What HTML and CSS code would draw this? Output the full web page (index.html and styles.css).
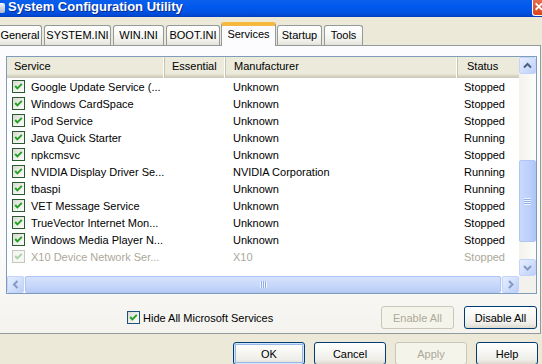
FILE: index.html
```html
<!DOCTYPE html>
<html>
<head>
<meta charset="utf-8">
<title>System Configuration Utility</title>
<link rel="stylesheet" href="styles.css">
</head>
<body>
<div class="window">
  <div class="titlebar">
    <span class="app-icon"></span>
    <span class="title">System Configuration Utility</span>
    <span class="close"><svg viewBox="0 0 10 15"><path d="M3 3 L10 10 M10 3 L3 10"/></svg></span>
  </div>

  <div class="tabs">
    <div class="tab t-general">General</div>
    <div class="tab t-system">SYSTEM.INI</div>
    <div class="tab t-win">WIN.INI</div>
    <div class="tab t-boot">BOOT.INI</div>
    <div class="tab t-services active">Services</div>
    <div class="tab t-startup">Startup</div>
    <div class="tab t-tools">Tools</div>
  </div>

  <div class="panel">
    <div class="listbox">
      <div class="listview">
        <div class="header">
          <div class="hcell">Service</div>
          <div class="hcell">Essential</div>
          <div class="hcell hcell-mfr">Manufacturer</div>
          <div class="hcell hcell-last">Status</div>
        </div>
        <div class="rows">
          <div class="row"><div class="c-name"><span class="cb"><svg viewBox="0 0 11 11"><path d="M2.2 5 L4.4 7.4 L8.8 2.8"/></svg></span>Google Update Service (...</div><div></div><div class="c-mfr">Unknown</div><div class="c-status">Stopped</div></div>
          <div class="row"><div class="c-name"><span class="cb"><svg viewBox="0 0 11 11"><path d="M2.2 5 L4.4 7.4 L8.8 2.8"/></svg></span>Windows CardSpace</div><div></div><div class="c-mfr">Unknown</div><div class="c-status">Stopped</div></div>
          <div class="row"><div class="c-name"><span class="cb"><svg viewBox="0 0 11 11"><path d="M2.2 5 L4.4 7.4 L8.8 2.8"/></svg></span>iPod Service</div><div></div><div class="c-mfr">Unknown</div><div class="c-status">Stopped</div></div>
          <div class="row"><div class="c-name"><span class="cb"><svg viewBox="0 0 11 11"><path d="M2.2 5 L4.4 7.4 L8.8 2.8"/></svg></span>Java Quick Starter</div><div></div><div class="c-mfr">Unknown</div><div class="c-status">Running</div></div>
          <div class="row"><div class="c-name"><span class="cb"><svg viewBox="0 0 11 11"><path d="M2.2 5 L4.4 7.4 L8.8 2.8"/></svg></span>npkcmsvc</div><div></div><div class="c-mfr">Unknown</div><div class="c-status">Stopped</div></div>
          <div class="row"><div class="c-name"><span class="cb"><svg viewBox="0 0 11 11"><path d="M2.2 5 L4.4 7.4 L8.8 2.8"/></svg></span>NVIDIA Display Driver Se...</div><div></div><div class="c-mfr">NVIDIA Corporation</div><div class="c-status">Running</div></div>
          <div class="row"><div class="c-name"><span class="cb"><svg viewBox="0 0 11 11"><path d="M2.2 5 L4.4 7.4 L8.8 2.8"/></svg></span>tbaspi</div><div></div><div class="c-mfr">Unknown</div><div class="c-status">Running</div></div>
          <div class="row"><div class="c-name"><span class="cb"><svg viewBox="0 0 11 11"><path d="M2.2 5 L4.4 7.4 L8.8 2.8"/></svg></span>VET Message Service</div><div></div><div class="c-mfr">Unknown</div><div class="c-status">Stopped</div></div>
          <div class="row"><div class="c-name"><span class="cb"><svg viewBox="0 0 11 11"><path d="M2.2 5 L4.4 7.4 L8.8 2.8"/></svg></span>TrueVector Internet Mon...</div><div></div><div class="c-mfr">Unknown</div><div class="c-status">Stopped</div></div>
          <div class="row"><div class="c-name"><span class="cb"><svg viewBox="0 0 11 11"><path d="M2.2 5 L4.4 7.4 L8.8 2.8"/></svg></span>Windows Media Player N...</div><div></div><div class="c-mfr">Unknown</div><div class="c-status">Stopped</div></div>
          <div class="row disabled"><div class="c-name"><span class="cb"><svg viewBox="0 0 11 11"><path d="M2.2 5 L4.4 7.4 L8.8 2.8"/></svg></span>X10 Device Network Ser...</div><div></div><div class="c-mfr">X10</div><div class="c-status">Stopped</div></div>
        </div>
      </div>

      <div class="vscroll">
        <div class="sbtn"><svg viewBox="0 0 15 15"><path class="arr dark" d="M4 9.5 L7.5 6 L11 9.5"/></svg></div>
        <div class="vtrack">
          <div class="vthumb"><span class="grip-h"></span></div>
        </div>
        <div class="sbtn"><svg viewBox="0 0 15 15"><path class="arr" d="M4 6 L7.5 9.5 L11 6"/></svg></div>
      </div>

      <div class="hscroll">
        <div class="sbtn"><svg viewBox="0 0 15 15"><path class="arr" d="M9.5 4 L6 7.5 L9.5 11"/></svg></div>
        <div class="hthumb"><span class="grip-v"></span></div>
        <div class="sbtn"><svg viewBox="0 0 15 15"><path class="arr" d="M6 4 L9.5 7.5 L6 11"/></svg></div>
      </div>
      <div class="corner"></div>
    </div>

    <div class="panel-footer">
      <label class="hide-ms"><span class="cb"><svg viewBox="0 0 11 11"><path d="M2.2 5 L4.4 7.4 L8.8 2.8"/></svg></span>Hide All Microsoft Services</label>
      <div class="btn-group">
        <button class="btn disabled-btn">Enable All</button>
        <button class="btn">Disable All</button>
      </div>
    </div>
  </div>

  <div class="dialog-buttons">
    <button class="btn dlg default-btn">OK</button>
    <button class="btn dlg">Cancel</button>
    <button class="btn dlg disabled-btn">Apply</button>
    <button class="btn dlg help">Help</button>
  </div>
</div>
<div class="watermark">Protect more of your memories for less</div>
</body>
</html>
```

FILE: styles.css
```css
* { box-sizing: border-box; }

html, body {
  margin: 0;
  padding: 0;
}

body {
  width: 542px;
  height: 364px;
  overflow: hidden;
  position: relative;
  background: #ECE9D8;
  font-family: "Liberation Sans", Arial, sans-serif;
  font-size: 11px;
  color: #000;
}

.window {
  width: 542px;
}

/* ---------- title bar ---------- */
.titlebar {
  height: 17px;
  display: flex;
  align-items: flex-start;
  background: linear-gradient(to bottom, #0B5FEC 0%, #0259EE 35%, #0054E6 65%, #004AD5 88%, #003FBC 100%);
}

.app-icon {
  width: 5px;
  height: 10px;
  margin-top: 3px;
  margin-right: 3px;
  background: linear-gradient(to bottom, #F4F6FA, #AEB8CC);
  border-radius: 0 2px 2px 0;
}

.title {
  color: #fff;
  font-weight: bold;
  font-size: 13px;
  line-height: 14px;
  text-shadow: 1px 1px 0 #0A2A8A;
  white-space: nowrap;
}

.close {
  margin-left: auto;
  width: 10px;
  height: 16px;
  background: linear-gradient(to bottom, #E86D4A, #D9461F);
  border-left: 1px solid #fff;
  border-bottom: 1px solid #fff;
  border-radius: 0 0 0 3px;
}

.close svg {
  display: block;
  width: 9px;
  height: 15px;
}

.close path {
  stroke: #fff;
  stroke-width: 2;
  fill: none;
}

/* ---------- tabs ---------- */
.tabs {
  height: 28px;
  display: flex;
  align-items: flex-end;
  margin-left: -5px;
  position: relative;
  z-index: 2;
}

.tab {
  height: 20px;
  margin-right: 2px;
  border: 1px solid #919B9C;
  border-bottom: none;
  border-radius: 3px 3px 0 0;
  background: linear-gradient(to bottom, #FFFFFF 0%, #FAFAF8 40%, #EFEEE8 80%, #E3E2DA 100%);
  text-align: center;
  line-height: 19px;
  white-space: nowrap;
}

.t-general { width: 47px; padding-left: 3px; }
.t-system { width: 67px; }
.t-win { width: 51px; }
.t-boot { width: 54px; margin-right: 1px; }
.t-services { width: 55px; margin-right: 1px; }
.t-startup { width: 45px; }
.t-tools { width: 39px; }

.tab.active {
  height: 24px;
  margin-bottom: -1px;
  background: #FCFCFE;
  border-top: 3px solid #F7B93C;
  box-shadow: inset 0 1px 0 #F3B845;
  line-height: 19px;
  border-radius: 3px 3px 0 0;
}

/* ---------- panel ---------- */
.panel {
  margin-left: -3px;
  width: 544px;
  height: 289px;
  border: 1px solid #919B9C;
  background: linear-gradient(to bottom, #FCFCFE 0%, #FBFBFB 70%, #F4F3EE 100%);
  padding: 10px 3px 4px 8px;
  position: relative;
  z-index: 1;
}

.listbox {
  width: 531px;
  height: 238px;
  border: 1px solid #7F9DB9;
  background: #fff;
  display: grid;
  grid-template-columns: 512px 17px;
  grid-template-rows: 219px 17px;
}

.listview {
  overflow: hidden;
}

.header {
  height: 21px;
  display: grid;
  grid-template-columns: 158px 61px 232px 61px;
  background: linear-gradient(to bottom, #EBEADB 0%, #EBEADB 80%, #E2DECD 85%, #D6D2C2 92%, #CBC7B8 100%);
}

.hcell {
  padding-left: 7px;
  line-height: 19px;
  border-right: 1px solid #C7C5B2;
  box-shadow: inset -1px 0 0 #FFFFFF;
  white-space: nowrap;
  overflow: hidden;
}

.hcell-mfr { padding-left: 8px; }

.hcell-last {
  border-right: none;
  box-shadow: none;
  padding-left: 9px;
}

.row {
  height: 17px;
  display: grid;
  grid-template-columns: 158px 61px 232px 61px;
  align-items: center;
  white-space: nowrap;
}

.c-name {
  display: flex;
  align-items: center;
  padding-left: 5px;
}

.c-mfr { padding-left: 7px; }
.c-status { padding-left: 6px; }

.cb {
  width: 13px;
  height: 13px;
  flex: none;
  margin-right: 6px;
  border: 1px solid #2A5A30;
  background: linear-gradient(135deg, #D9D8D2 0%, #EDEDE9 50%, #FBFBF9 100%);
}

.cb svg {
  display: block;
  width: 11px;
  height: 11px;
}

.cb path {
  fill: none;
  stroke: #21A121;
  stroke-width: 1.9;
}

.row.disabled { color: #ACA899; }

.row.disabled .cb {
  border-color: #C3C8BE;
  background: #F6F6F2;
}

.row.disabled .cb path { stroke: #A8D3A8; }

/* ---------- scrollbars ---------- */
.vscroll {
  display: flex;
  flex-direction: column;
  background: linear-gradient(to right, #F3F2EC, #FDFDFA);
}

.sbtn {
  width: 17px;
  height: 17px;
  flex: none;
  border: 1px solid #C3D3FD;
  border-radius: 2px;
  background: linear-gradient(135deg, #E6EEFE 0%, #D2E0FC 50%, #BCCFF8 100%);
}

.sbtn svg {
  display: block;
  width: 15px;
  height: 15px;
}

.arr {
  fill: none;
  stroke: #8699C2;
  stroke-width: 2;
}

.arr.dark { stroke: #4D6185; }

.vtrack {
  flex: 1;
  padding-top: 86px;
}

.vthumb {
  height: 82px;
  border: 1px solid #AFC5F6;
  border-radius: 2px;
  background: linear-gradient(to right, #CAD9FC 0%, #BDD0FA 60%, #AFC6F6 100%);
  display: flex;
  align-items: center;
  justify-content: center;
}

.grip-h {
  width: 7px;
  height: 7px;
  background: repeating-linear-gradient(to bottom, #EEF4FE 0, #EEF4FE 1px, #8EAEF0 1px, #8EAEF0 2px);
}

.hscroll {
  display: flex;
  align-items: stretch;
  background: linear-gradient(to bottom, #F3F2EC, #FDFDFA);
}

.hthumb {
  flex: 1;
  margin: 0 1px;
  border: 1px solid #AFC5F6;
  border-radius: 2px;
  background: linear-gradient(to bottom, #D6E2FC 0%, #C6D6FA 60%, #B8CCF7 100%);
  display: flex;
  align-items: center;
  justify-content: center;
}

.grip-v {
  width: 7px;
  height: 7px;
  background: repeating-linear-gradient(to right, #EEF4FE 0, #EEF4FE 1px, #8EAEF0 1px, #8EAEF0 2px);
}

.corner {
  background: #F2F1EB;
}

/* ---------- footer ---------- */
.panel-footer {
  margin-top: 12px;
  height: 23px;
  display: flex;
  align-items: center;
}

.hide-ms {
  display: flex;
  align-items: center;
  margin-left: 121px;
  white-space: nowrap;
}

.hide-ms .cb {
  margin-right: 3px;
  border-color: #1C5180;
}

.btn-group {
  margin-left: auto;
  display: flex;
  gap: 10px;
}

.btn {
  width: 73px;
  height: 23px;
  padding: 0;
  border: 1px solid #003C74;
  border-radius: 3px;
  background: linear-gradient(to bottom, #FFFFFF 0%, #F7F7F4 40%, #EEEDE8 80%, #DCD8CC 100%);
  font-family: "Liberation Sans", Arial, sans-serif;
  font-size: 11px;
  color: #000;
  text-align: center;
}

.btn.disabled-btn {
  border-color: #C9C7BA;
  background: #F5F4EA;
  color: #ACA899;
}

.dialog-buttons {
  margin-top: 8px;
  display: flex;
  justify-content: flex-end;
  gap: 9px;
  padding-right: 4px;
}

.btn.dlg { width: 72px; }
.btn.dlg.help { width: 62px; }

.btn.default-btn {
  box-shadow: inset 0 0 0 1px #CEE7FF, inset 0 0 0 2px #98B8EA;
}

/* ---------- photo watermark overlay ---------- */
.watermark {
  position: absolute;
  left: 33px;
  top: 267px;
  font-size: 26px;
  line-height: 24px;
  white-space: nowrap;
  color: rgba(255, 255, 255, 0.6);
  text-shadow: 0 0 1px rgba(140, 160, 210, 0.5);
  pointer-events: none;
}
```
